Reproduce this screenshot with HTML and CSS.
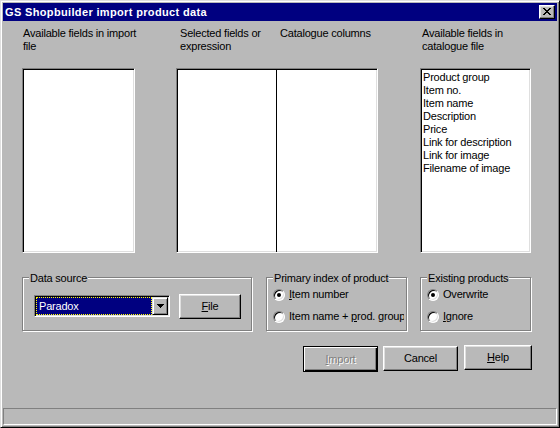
FILE: index.html
```html
<!DOCTYPE html>
<html>
<head>
<meta charset="utf-8">
<link rel="stylesheet" href="styles.css">
</head>
<body>
<div class="window">
  <div class="titlebar">
    <span class="title">GS Shopbuilder import product data</span>
    <span class="close"><svg width="14" height="12" viewBox="0 0 14 12"><path d="M3 2h2v1h-2zM9 2h2v1h-2zM4 3h2v1h-2zM8 3h2v1h-2zM5 4h4v1h-4zM6 5h2v1h-2zM5 6h4v1h-4zM4 7h2v1h-2zM8 7h2v1h-2zM3 8h2v1h-2zM9 8h2v1h-2z" fill="#000"/></svg></span>
  </div>
  <div class="body">
    <div class="fields">
      <div class="label l1">Available fields in import<br>file</div>
      <div class="label l2"><span class="half">Selected fields or<br>expression</span><span class="half2">Catalogue columns</span></div>
      <div class="label l3">Available fields in<br>catalogue file</div>
      <div class="box"></div>
      <div class="box split"><div class="col"></div><div class="divider"></div><div class="col"></div></div>
      <div class="box list">
        <div>Product group</div>
        <div>Item no.</div>
        <div>Item name</div>
        <div>Description</div>
        <div>Price</div>
        <div>Link for description</div>
        <div>Link for image</div>
        <div>Filename of image</div>
      </div>
    </div>
    <div class="groups">
      <div class="group ds">
        <div class="legend">Data source</div>
        <div class="ds-row">
          <div class="combo">
            <div class="combo-value"><span>Paradox</span></div>
            <div class="combo-btn"><svg width="7" height="4" viewBox="0 0 7 4"><path d="M0 0h7v1h-7zM1 1h5v1h-5zM2 2h3v1h-3zM3 3h1v1h-1z" fill="#000"/></svg></div>
          </div>
          <div class="btn file"><span><u>F</u>ile</span></div>
        </div>
      </div>
      <div class="group pi">
        <div class="legend">Primary index of product</div>
        <div class="radios">
          <div class="radio-row"><span class="radio on"></span><span class="rtext"><u>I</u>tem number</span></div>
          <div class="radio-row"><span class="radio"></span><span class="rtext">Item name + <u>p</u>rod. group</span></div>
        </div>
      </div>
      <div class="group ep">
        <div class="legend">Existing products</div>
        <div class="radios">
          <div class="radio-row"><span class="radio on"></span><span class="rtext">Overwrite</span></div>
          <div class="radio-row"><span class="radio"></span><span class="rtext"><u>I</u>gnore</span></div>
        </div>
      </div>
    </div>
    <div class="actions">
      <div class="btn default disabled"><span><u>I</u>mport</span></div>
      <div class="btn cancel"><span>Cancel</span></div>
      <div class="btn help"><span><u>H</u>elp</span></div>
    </div>
  </div>
  <div class="statusbar"></div>
</div>
</body>
</html>
```
FILE: styles.css
```css
* { box-sizing: border-box; }
html, body { margin: 0; padding: 0; background: #b9b9b9; }
body {
  font-family: "Liberation Sans", Arial, sans-serif;
  font-size: 11px;
  line-height: 13px;
  letter-spacing: -0.2px;
  color: #000;
}
.window {
  width: 560px;
  height: 428px;
  background: #b9b9b9;
  border: 1px solid;
  border-color: #dfdfdf #000 #000 #dfdfdf;
  box-shadow: inset 1px 1px 0 #fff, inset -1px -1px 0 #808080;
  padding: 2px;
  display: flex;
  flex-direction: column;
}
.titlebar {
  height: 18px;
  background: #000080;
  display: flex;
  align-items: center;
  justify-content: space-between;
  padding-left: 2px;
  padding-right: 2px;
  flex: none;
}
.title {
  color: #fff;
  font-weight: bold;
  font-size: 11px;
  letter-spacing: 0.35px;
}
.close {
  width: 16px;
  height: 14px;
  background: #b9b9b9;
  border: 1px solid;
  border-color: #fff #000 #000 #fff;
  box-shadow: inset -1px -1px 0 #808080, inset 1px 1px 0 #dfdfdf;
  display: flex;
}
.close svg { display: block; }
.body {
  flex: 1;
  padding: 6px 25px 0 19px;
  display: flex;
  flex-direction: column;
}
.fields {
  display: grid;
  grid-template-columns: 113px 202px 112px;
  grid-template-rows: 41px 185px;
  column-gap: 41px;
}
.label { white-space: nowrap; }
.l1 { padding-left: 1px; }
.l2 { display: flex; }
.l2 .half { width: 100px; padding-left: 4px; flex: none; }
.l2 .half2 { padding-left: 4px; }
.l3 { padding-left: 2px; margin-left: 1px; }
.box {
  background: #fff;
  border: 1px solid;
  border-color: #808080 #fff #fff #808080;
  box-shadow: inset 1px 1px 0 #000, inset -1px -1px 0 #dfdfdf;
}
.split {
  display: grid;
  grid-template-columns: 99px 1px 1fr;
}
.split .divider { background: #000; }
.list {
  margin-left: 1px;
  padding: 2px 0 0 2px;
  white-space: nowrap;
}
.groups {
  display: flex;
  margin-top: 24px;
}
.group {
  height: 54px;
  border: 1px solid #808080;
  box-shadow: inset 1px 1px 0 #fff, 1px 1px 0 #fff;
  flex: none;
}
.ds { width: 230px; }
.pi { width: 141px; margin-left: 14px; }
.ep { width: 111px; margin-left: 13px; }
.legend {
  width: fit-content;
  margin-top: -6px;
  margin-left: 6px;
  padding: 0 1px;
  background: #b9b9b9;
  white-space: nowrap;
}
.ds-row {
  display: flex;
  align-items: flex-start;
  margin-top: 9px;
  padding-left: 11px;
}
.combo {
  width: 136px;
  height: 22px;
  margin-top: 1px;
  background: #fff;
  border: 1px solid;
  border-color: #808080 #fff #fff #808080;
  box-shadow: inset 1px 1px 0 #000, inset -1px -1px 0 #dfdfdf;
  padding: 1px;
  display: flex;
}
.combo-value {
  flex: 1;
  background: #000080;
  border: 1px dotted #ffff00;
  color: #fff;
  padding-left: 2px;
  display: flex;
  align-items: center;
}
.combo-btn {
  width: 16px;
  height: 18px;
  flex: none;
  background: #b9b9b9;
  border: 1px solid;
  border-color: #dfdfdf #000 #000 #dfdfdf;
  box-shadow: inset 1px 1px 0 #fff, inset -1px -1px 0 #808080;
  display: flex;
  align-items: center;
  justify-content: center;
}
.combo-btn svg { display: block; }
.btn {
  height: 25px;
  background: #b9b9b9;
  border: 1px solid;
  border-color: #fff #000 #000 #fff;
  box-shadow: inset -1px -1px 0 #808080, inset 1px 1px 0 #dfdfdf;
  display: flex;
  align-items: center;
  justify-content: center;
  flex: none;
  white-space: nowrap;
}
.file { width: 62px; margin-left: 9px; }
.radios {
  display: flex;
  flex-direction: column;
  row-gap: 9px;
  margin-top: 3px;
  padding-left: 6px;
}
.radio-row {
  display: flex;
  align-items: center;
  height: 13px;
  white-space: nowrap;
  overflow: hidden;
  margin-right: 2px;
}
.radio {
  width: 12px;
  height: 12px;
  flex: none;
  border-radius: 50%;
  background: #fff;
  border: 1px solid;
  border-color: #808080 #fff #fff #808080;
  box-shadow: inset 1px 1px 0 #000, inset -1px -1px 0 #dfdfdf;
  display: flex;
  align-items: center;
  justify-content: center;
}
.radio.on::after {
  content: "";
  width: 4px;
  height: 4px;
  border-radius: 50%;
  background: #000;
}
.rtext { margin-left: 4px; }
.actions {
  display: flex;
  justify-content: flex-end;
  align-items: flex-start;
  margin-top: 15px;
}
.default {
  width: 75px;
  height: 26px;
  border: 1px solid #000;
  box-shadow: inset 1px 1px 0 #fff, inset -1px -1px 0 #000, inset -2px -2px 0 #808080;
}
.disabled { color: #808080; text-shadow: 1px 1px 0 #fff; }
.cancel { width: 75px; margin-left: 5px; }
.help { width: 68px; margin-left: 6px; margin-top: -1px; }
.statusbar {
  height: 17px;
  flex: none;
  border: 1px solid;
  border-color: #808080 #fff #fff #808080;
}
```
